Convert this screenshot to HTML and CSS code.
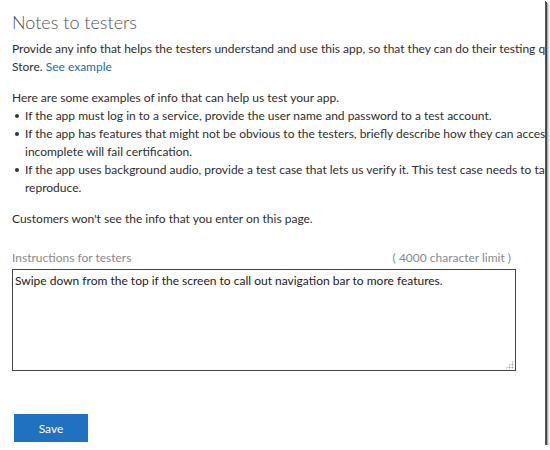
FILE: index.html
```html
<!DOCTYPE html>
<html lang="en">
<head>
    <meta charset="UTF-8">
    <meta name="viewport" content="width=device-width, initial-scale=1.0">
    <title>Notes to testers</title>
    <link rel="stylesheet" href="styles.css">
</head>
<body>
    <div class="frame">
        <div class="page">
            <h1 class="title">Notes to testers</h1>

            <p class="text">
                <span class="line">Provide any info that helps the testers understand and use this app, so that they can do their testing quickly and thoroughly in the</span>
                <span class="line">Store. <a href="#" class="link">See example</a></span>
            </p>

            <div class="text">
                <span class="line">Here are some examples of info that can help us test your app.</span>
                <ul class="tips">
                    <li><span class="line">If the app must log in to a service, provide the user name and password to a test account.</span></li>
                    <li>
                        <span class="line">If the app has features that might not be obvious to the testers, briefly describe how they can access them. Apps that seem</span>
                        <span class="line">incomplete will fail certification.</span>
                    </li>
                    <li>
                        <span class="line">If the app uses background audio, provide a test case that lets us verify it. This test case needs to take only a few minutes to</span>
                        <span class="line">reproduce.</span>
                    </li>
                </ul>
            </div>

            <p class="text">
                <span class="line">Customers won't see the info that you enter on this page.</span>
            </p>

            <div class="field">
                <div class="field-head">
                    <label for="notes" class="label">Instructions for testers</label>
                    <span class="limit">( 4000 character limit )</span>
                </div>
                <div class="box">
                    <textarea id="notes" class="notes">Swipe down from the top if the screen to call out navigation bar to more features.</textarea>
                    <span class="grip"></span>
                </div>
            </div>

            <button class="save">Save</button>
        </div>
    </div>
</body>
</html>
```

FILE: styles.css
```css
body {
    margin: 0;
    background-color: #fff;
    font-family: Lato, "Open Sans", sans-serif;
    color: #2e2e2e;
}

.frame {
    width: 545px;
    height: 445px;
    overflow: hidden;
    background-color: #fff;
    box-shadow: 1px 1px 0 #555, 2px 2px 0 #444, 3px 3px 2px rgba(0, 0, 0, 0.45);
}

.page {
    padding: 8px 0 0 12px;
}

.title {
    margin: 0 0 4px 0;
    font-size: 18px;
    font-weight: 300;
    line-height: 28px;
    color: #555;
}

.text {
    margin: 0 0 13px 0;
    font-size: 12px;
    line-height: 18px;
}

.line {
    display: block;
    white-space: nowrap;
}

.link {
    color: #1b6ea8;
    text-decoration: none;
}

.tips {
    margin: 0;
    padding: 0;
    list-style: none;
}

.tips li {
    position: relative;
    padding-left: 13px;
}

.tips li::before {
    content: "";
    position: absolute;
    left: 3px;
    top: 7px;
    width: 4px;
    height: 4px;
    border-radius: 50%;
    background-color: #333;
}

.field {
    width: 504px;
    margin-top: 22px;
}

.field-head {
    display: flex;
    justify-content: space-between;
    padding-right: 5px;
    font-size: 12px;
    line-height: 16px;
    color: #8a8a8a;
}

.box {
    position: relative;
    margin-top: 3px;
}

.notes {
    display: block;
    box-sizing: border-box;
    width: 504px;
    height: 102px;
    margin: 0;
    padding: 3px 2px;
    border: 1px solid #444;
    font-family: inherit;
    font-size: 12px;
    line-height: 16px;
    color: #222;
    resize: none;
    outline: none;
}

.grip {
    position: absolute;
    right: 2px;
    bottom: 2px;
    width: 9px;
    height: 9px;
    background-image: radial-gradient(circle, #aaa 0.9px, transparent 1.1px);
    background-size: 3px 3px;
    clip-path: polygon(100% 0, 100% 100%, 0 100%);
}

.save {
    display: block;
    width: 74px;
    height: 28px;
    margin: 43px 0 0 2px;
    padding: 0;
    border: none;
    background-color: #1f71c1;
    color: #fff;
    font-family: inherit;
    font-size: 12px;
    cursor: pointer;
}
```
